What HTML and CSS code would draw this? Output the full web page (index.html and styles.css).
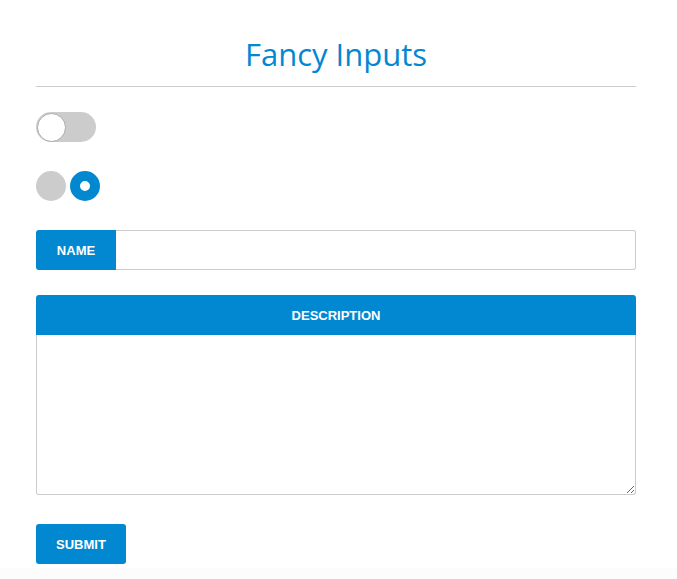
FILE: index.html
```html
<!DOCTYPE html>
<html>
<head>
<meta charset="utf-8">
<link rel="stylesheet" href="styles.css">
</head>
<body>
<div class="page">
  <div class="form">
    <h1 class="title">Fancy Inputs</h1>
    <div class="rule"></div>
    <div class="toggle"><span class="knob"></span></div>
    <div class="radios">
      <span class="radio"></span>
      <span class="radio checked"></span>
    </div>
    <div class="field">
      <label class="field-label">NAME</label>
      <input class="field-input" type="text">
    </div>
    <div class="area">
      <div class="area-label">DESCRIPTION</div>
      <textarea class="area-input"></textarea>
    </div>
    <button class="submit">SUBMIT</button>
  </div>
</div>
</body>
</html>
```
FILE: styles.css
```css
html { background: #fcfcfc; }
body { margin: 0; font-family: "Liberation Sans", Arial, sans-serif; }
.page { background: #fff; width: 677px; height: 568px; box-sizing: border-box; padding: 36px 0 0 36px; }
.form { width: 600px; display: flex; flex-direction: column; align-items: flex-start; }
.title { margin: 0; width: 100%; text-align: center; font-family: "Open Sans", sans-serif; font-weight: 400; font-size: 31px; line-height: 36px; color: #0288d1; }
.rule { width: 100%; height: 1px; background: #cccccc; margin-top: 14px; }
.toggle { margin-top: 25px; width: 60px; height: 30px; border-radius: 15px; background: #cccccc; display: flex; align-items: center; }
.knob { width: 27px; height: 27px; border-radius: 50%; background: #fff; border: 1px solid #aaaaaa; box-sizing: content-box; margin-left: 0.5px; }
.radios { margin-top: 29px; display: flex; gap: 4px; }
.radio { width: 30px; height: 30px; border-radius: 50%; background: #cccccc; box-sizing: border-box; }
.radio.checked { background: #fff; border: 10px solid #0288d1; }
.field { margin-top: 29px; width: 100%; height: 40px; display: flex; }
.field-label { width: 80px; flex: none; background: #0288d1; color: #fff; font-weight: bold; font-size: 13px; display: flex; align-items: center; justify-content: center; border-radius: 3px 0 0 3px; }
.field-input { flex: 1; min-width: 0; margin: 0; border: 1px solid #cccccc; border-left: none; border-radius: 0 3px 3px 0; padding: 0 10px; font: inherit; outline: none; }
.area { margin-top: 25px; width: 100%; display: flex; flex-direction: column; }
.area-label { height: 40px; background: #0288d1; color: #fff; font-weight: bold; font-size: 13px; display: flex; align-items: center; justify-content: center; border-radius: 3px 3px 0 0; }
.area-input { height: 160px; margin: 0; border: 1px solid #cccccc; border-top: none; border-radius: 0 0 3px 3px; box-sizing: border-box; width: 100%; resize: both; font: inherit; outline: none; display: block; }
.submit { margin-top: 29px; height: 40px; padding: 0 20px; border: none; border-radius: 3px; background: #0288d1; color: #fff; font-family: "Liberation Sans", Arial, sans-serif; font-weight: bold; font-size: 13px; cursor: pointer; }
```
